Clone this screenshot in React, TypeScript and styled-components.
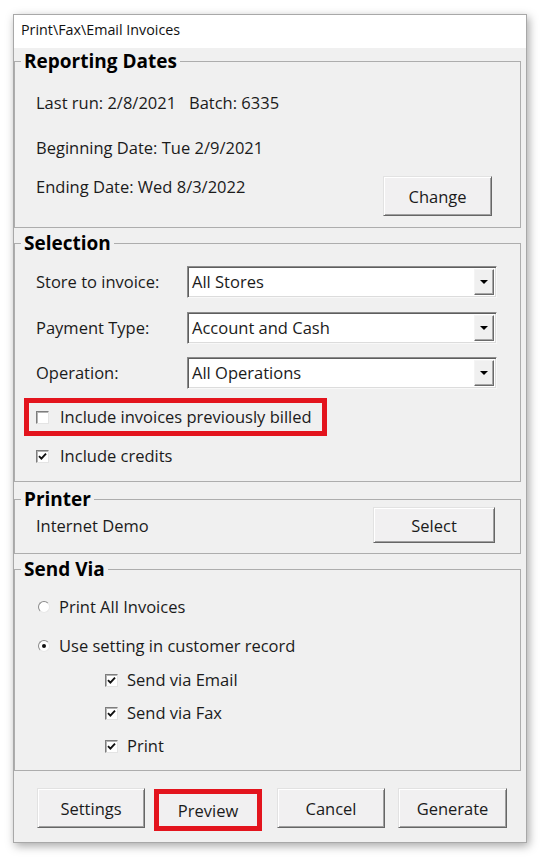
import styled, { createGlobalStyle } from "styled-components";

const GlobalStyle = createGlobalStyle`
  html, body {
    margin: 0;
    background: #ffffff;
  }
  body {
    font-family: "Open Sans", "Noto Sans", sans-serif;
    color: #1b1b1b;
  }
  #root {
    padding: 14px 0 16px 13px;
  }
`;

const Window = styled.div`
  width: 514px;
  box-sizing: border-box;
  border: 1px solid #a8a8a8;
  background: #f0f0f0;
  box-shadow: 2px 3px 9px rgba(0, 0, 0, 0.35);
  display: flex;
  flex-direction: column;
`;

const TitleBar = styled.div`
  height: 33px;
  box-sizing: border-box;
  padding: 5px 0 0 7px;
  background: #ffffff;
  font-size: 14.3px;
  line-height: 19px;
  color: #111;
`;

const Body = styled.div`
  display: flex;
  flex-direction: column;
  padding: 0 5px 11px 0;
`;

const Group = styled.fieldset<{ $mt: number }>`
  margin: ${(p) => p.$mt}px 0 0;
  padding: 0;
  min-width: 0;
  border: 1px solid #adadad;
`;

const Legend = styled.legend`
  margin-left: 6px;
  padding: 0 3px;
  font-size: 19px;
  font-weight: 700;
  line-height: 16px;
  color: #000;
`;

const GroupBody = styled.div<{ $pad: string }>`
  display: flex;
  flex-direction: column;
  padding: ${(p) => p.$pad};
`;

const Line = styled.div<{ $mt?: number }>`
  margin-top: ${(p) => p.$mt ?? 0}px;
  font-size: 16.5px;
  line-height: 20px;
  white-space: nowrap;
`;

const SplitRow = styled.div<{ $mt?: number; $align?: string }>`
  display: flex;
  justify-content: space-between;
  align-items: ${(p) => p.$align ?? "center"};
  margin-top: ${(p) => p.$mt ?? 0}px;
`;

const Button = styled.button<{ $w: number; $h: number; $ml?: number; $mt?: number; $mark?: boolean }>`
  width: ${(p) => p.$w}px;
  height: ${(p) => p.$h}px;
  margin: ${(p) => p.$mt ?? 0}px 0 0 ${(p) => p.$ml ?? 0}px;
  padding: 0;
  box-sizing: border-box;
  font-family: "Open Sans", "Noto Sans", sans-serif;
  font-size: 16.5px;
  color: #1b1b1b;
  background: #f1f0f1;
  border: ${(p) => (p.$mark ? "5px solid #e3141d" : "1px solid")};
  border-color: ${(p) => (p.$mark ? "#e3141d" : "#e2e2e2 #666 #666 #e2e2e2")};
  box-shadow: ${(p) => (p.$mark ? "none" : "inset 1px 1px 0 #fff, inset -1px -1px 0 #a0a0a0")};
  flex-shrink: 0;
`;

const FieldRow = styled.div<{ $mt?: number }>`
  display: flex;
  align-items: center;
  height: 32px;
  margin-top: ${(p) => p.$mt ?? 0}px;
`;

const FieldLabel = styled.span`
  width: 151px;
  font-size: 16.5px;
  line-height: 20px;
`;

const Combo = styled.div`
  flex: 1;
  height: 32px;
  box-sizing: border-box;
  display: flex;
  background: #fff;
  border: 1px solid;
  border-color: #8c8c8c #f8f8f8 #f8f8f8 #8c8c8c;
  box-shadow: inset 1px 1px 0 #5e5e5e, inset -1px -1px 0 #dcdcdc;
`;

const ComboValue = styled.span`
  flex: 1;
  padding-left: 4px;
  font-size: 16.5px;
  line-height: 29px;
`;

const DropButton = styled.span`
  width: 20px;
  margin: 2px 2px 2px 0;
  box-sizing: border-box;
  display: flex;
  align-items: center;
  justify-content: center;
  background: #f0f0f0;
  border: 1px solid;
  border-color: #f4f4f4 #6a6a6a #6a6a6a #f4f4f4;
  box-shadow: inset -1px -1px 0 #a6a6a6;
`;

const Highlight = styled.div`
  width: 303px;
  height: 38px;
  box-sizing: border-box;
  margin: 9px 0 0 -12px;
  padding-left: 7px;
  display: flex;
  align-items: center;
  border: 5px solid #e3141d;
`;

const OptionRow = styled.div<{ $mt?: number; $ml?: number; $gap?: number }>`
  display: flex;
  align-items: center;
  gap: ${(p) => p.$gap ?? 11}px;
  height: 20px;
  margin: ${(p) => p.$mt ?? 0}px 0 0 ${(p) => p.$ml ?? 0}px;
  font-size: 16.5px;
  line-height: 20px;
  white-space: nowrap;
`;

const Box = styled.span`
  width: 13px;
  height: 13px;
  box-sizing: border-box;
  display: flex;
  align-items: center;
  justify-content: center;
  background: #fff;
  border: 1px solid;
  border-color: #7d7d7d #e4e4e4 #e4e4e4 #7d7d7d;
  box-shadow: inset 1px 1px 0 #b4b4b4;
`;

const Radio = styled.span`
  width: 12px;
  height: 12px;
  box-sizing: border-box;
  display: flex;
  align-items: center;
  justify-content: center;
  border-radius: 50%;
  background: #fff;
  border: 1px solid;
  border-color: #8a8a8a #e8e8e8 #e8e8e8 #8a8a8a;
`;

const Dot = styled.span`
  width: 4px;
  height: 4px;
  border-radius: 50%;
  background: #111;
`;

const Footer = styled.div`
  display: flex;
  align-items: flex-start;
  margin-top: 17px;
`;

function Check({ on }: { on?: boolean }) {
  return (
    <Box>
      {on && (
        <svg width="9" height="9" viewBox="0 0 9 9">
          <path d="M1 4.2 L3.4 6.6 L8 1.6" fill="none" stroke="#111" strokeWidth="1.9" />
        </svg>
      )}
    </Box>
  );
}

function Option({ on }: { on?: boolean }) {
  return <Radio>{on && <Dot />}</Radio>;
}

function Select({ label, value, mt }: { label: string; value: string; mt?: number }) {
  return (
    <FieldRow $mt={mt}>
      <FieldLabel>{label}</FieldLabel>
      <Combo>
        <ComboValue>{value}</ComboValue>
        <DropButton>
          <svg width="8" height="4" viewBox="0 0 8 4">
            <path d="M0 0 H8 L4 4 Z" fill="#000" />
          </svg>
        </DropButton>
      </Combo>
    </FieldRow>
  );
}

export default function App() {
  return (
    <>
      <GlobalStyle />
      <Window>
        <TitleBar>{"Print\\Fax\\Email Invoices"}</TitleBar>
        <Body>
          <Group $mt={5}>
            <Legend>Reporting Dates</Legend>
            <GroupBody $pad="24px 28px 11px 21px">
              <Line>{"Last run: 2/8/2021\u00a0\u00a0\u00a0Batch: 6335"}</Line>
              <Line $mt={25}>Beginning Date: Tue 2/9/2021</Line>
              <SplitRow $mt={18} $align="flex-start">
                <Line $mt={1}>Ending Date: Wed 8/3/2022</Line>
                <Button $w={109} $h={40}>Change</Button>
              </SplitRow>
            </GroupBody>
          </Group>

          <Group $mt={7}>
            <Legend>Selection</Legend>
            <GroupBody $pad="15px 23px 15px 21px">
              <Select label="Store to invoice:" value="All Stores" />
              <Select label="Payment Type:" value="Account and Cash" mt={14} />
              <Select label="Operation:" value="All Operations" mt={13} />
              <Highlight>
                <OptionRow>
                  <Check />
                  Include invoices previously billed
                </OptionRow>
              </Highlight>
              <OptionRow $mt={10}>
                <Check on />
                Include credits
              </OptionRow>
            </GroupBody>
          </Group>

          <Group $mt={9}>
            <Legend>Printer</Legend>
            <GroupBody $pad="0 25px 10px 21px">
              <SplitRow>
                <Line $mt={2}>Internet Demo</Line>
                <Button $w={122} $h={36}>Select</Button>
              </SplitRow>
            </GroupBody>
          </Group>

          <Group $mt={7}>
            <Legend>Send Via</Legend>
            <GroupBody $pad="20px 23px 14px 21px">
              <OptionRow $ml={2} $gap={9}>
                <Option />
                Print All Invoices
              </OptionRow>
              <OptionRow $mt={19} $ml={2} $gap={9}>
                <Option on />
                Use setting in customer record
              </OptionRow>
              <OptionRow $mt={14} $ml={69} $gap={9}>
                <Check on />
                Send via Email
              </OptionRow>
              <OptionRow $mt={13} $ml={69} $gap={9}>
                <Check on />
                Send via Fax
              </OptionRow>
              <OptionRow $mt={13} $ml={69} $gap={9}>
                <Check on />
                Print
              </OptionRow>
            </GroupBody>
          </Group>

          <Footer>
            <Button $w={108} $h={40} $ml={23}>Settings</Button>
            <Button $w={108} $h={42} $ml={9} $mt={1} $mark>Preview</Button>
            <Button $w={108} $h={40} $ml={15}>Cancel</Button>
            <Button $w={109} $h={40} $ml={13}>Generate</Button>
          </Footer>
        </Body>
      </Window>
    </>
  );
}
